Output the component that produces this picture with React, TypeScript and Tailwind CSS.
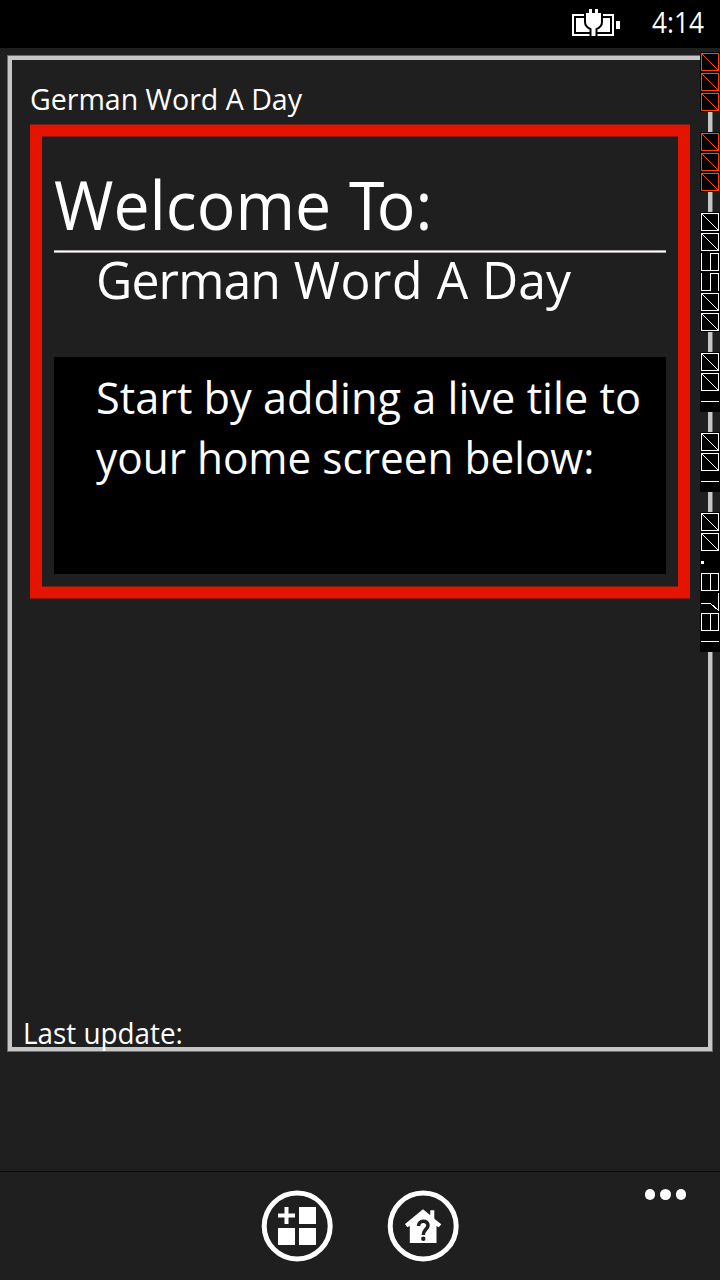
type Glyph = 'box' | 'six' | 'five' | 'dot' | 'eight' | 'seven' | 'dash'

const glyphPaths: Record<Glyph, string> = {
  box: 'M1.5 1.5H18.5V18.5H1.5ZL18.5 18.5',
  six: 'M1.5 1V18.5H18.5V1.5H10.5V18.5',
  five: 'M1.5 1V18.5H10.5V1.5H18.5V19',
  dot: 'M1 10.5H4',
  eight: 'M1.5 1.5H18.5V18.5H1.5ZM10.5 1.5V18.5',
  seven: 'M1 11.5H10.5L18.5 18.5V1',
  dash: 'M1 9.5H19',
}

const counters: { color: string; glyphs: Glyph[] }[] = [
  { color: '#ff4500', glyphs: ['box', 'box', 'box'] },
  { color: '#ff4500', glyphs: ['box', 'box', 'box'] },
  { color: '#ffffff', glyphs: ['box', 'box', 'six', 'five', 'box', 'box'] },
  { color: '#ffffff', glyphs: ['box', 'box', 'dash'] },
  { color: '#ffffff', glyphs: ['box', 'box', 'dash'] },
  { color: '#ffffff', glyphs: ['box', 'box', 'dot', 'eight', 'seven', 'eight', 'dash'] },
]

function FrameCounters() {
  return (
    <div className="absolute top-[52px] right-0 flex w-5 flex-col gap-5">
      {counters.map((group, i) => (
        <div key={i} className="flex flex-col bg-black">
          {group.glyphs.map((glyph, j) => (
            <svg key={j} viewBox="0 0 20 20" className="block size-5" shapeRendering="crispEdges">
              <path
                d={glyphPaths[glyph]}
                fill="none"
                stroke={group.color}
                strokeWidth={glyph === 'dot' ? 3 : 1}
              />
            </svg>
          ))}
        </div>
      ))}
    </div>
  )
}

function BatteryIcon() {
  const plug = 'M19 1H22V5H25V1H28V5H31V14Q31 18 25.5 20.5V28H21.5V20.5Q16 18 16 14V5H19Z'
  return (
    <svg viewBox="0 0 50 30" className="mt-2 h-[30px] w-[50px] shrink-0">
      <path d="M3 7H43V27H3Z" fill="none" stroke="#fff" strokeWidth="2" />
      <path d="M6 10H40V24H6Z" fill="#fff" />
      <path d="M46 13H50V21H46Z" fill="#fff" />
      <path d={plug} fill="none" stroke="#000" strokeWidth="4" />
      <path d={plug} fill="#fff" />
    </svg>
  )
}

function StatusBar() {
  return (
    <header className="flex h-12 shrink-0 items-start bg-black pl-[570px]">
      <BatteryIcon />
      <span className="ml-8 origin-left scale-x-[0.905] text-[29px] leading-[44px] whitespace-nowrap">4:14</span>
    </header>
  )
}

function AppBar() {
  return (
    <footer className="relative flex h-[109px] shrink-0 justify-center gap-[54px] border-t border-[#0b0b0b] pt-[18px]">
      <button aria-label="Add tile" className="size-[72px]">
        <svg viewBox="0 0 72 72" className="size-[72px]">
          <circle cx="36.2" cy="36" r="33" fill="none" stroke="#fff" strokeWidth="5" />
          <path
            d="M38 17H55V34H38ZM17 38H34V55H17ZM38 38H55V55H38ZM23.5 17H27.5V23.5H34V27.5H27.5V34H23.5V27.5H17V23.5H23.5Z"
            fill="#fff"
          />
        </svg>
      </button>
      <button aria-label="Help" className="size-[72px]">
        <svg viewBox="0 0 72 72" className="size-[72px]">
          <circle cx="36.2" cy="36" r="33" fill="none" stroke="#fff" strokeWidth="5" />
          <path d="M36 19.3L43.3 25.3V20.3H47.3V28.7L54.3 34.3L51.8 37.3L49.5 36V53H22.8V36L20.3 37.3L18 34Z" fill="#fff" />
          <path d="M31.5 36C31.5 29.8 41 29.8 41 35.3C41 39.6 36.3 39.2 36.3 45" fill="none" stroke="#1f1f1f" strokeWidth="3.6" />
          <circle cx="36.3" cy="48.7" r="2.2" fill="#1f1f1f" />
        </svg>
      </button>
      <button aria-label="More" className="absolute top-[17px] right-[34px] flex gap-[5px]">
        <span className="size-[10.5px] rounded-full bg-white" />
        <span className="size-[10.5px] rounded-full bg-white" />
        <span className="size-[10.5px] rounded-full bg-white" />
      </button>
    </footer>
  )
}

export default function App() {
  return (
    <div className="relative flex h-[1280px] w-[720px] flex-col overflow-hidden bg-[#1f1f1f] font-['Open_Sans','Noto_Sans',sans-serif] text-white">
      <StatusBar />
      <main className="flex-1 px-2 pt-2">
        <section className="flex h-[995px] flex-col border-4 border-[#c6c6c6] px-[18px] shadow-[0_0_0_1px_#6c6c6c]">
          <h1 className="h-[65px] pt-[19px] text-[29px] leading-[39px] whitespace-nowrap">
            <span className="inline-block origin-left scale-x-[0.984]">German Word A Day</span>
          </h1>
          <div className="h-[473px] w-[660px] shrink-0 border-x-12 border-y-11 border-[#e51400] px-3 shadow-[0_-1px_0_#7d1a12,0_1px_0_#7d1a12,inset_0_1px_0_#7d1a12,inset_0_-1px_0_#7d1a12]">
            <h2 className="h-[114px] pt-[22px] text-[67px] leading-[92px] whitespace-nowrap">
              <span className="inline-block origin-left scale-x-[0.961] [word-spacing:1px]">
                Welcome <span className="tracking-[-8px]">T</span>o:
              </span>
            </h2>
            <div className="h-[3px] border-y border-[#aaa6a6] bg-white" />
            <p className="h-[104px] pl-[42px] text-[52px] leading-[51px] whitespace-nowrap">
              <span className="inline-block origin-left scale-x-[0.96] [word-spacing:0.7px]">
                <span className="tracking-[-0.9px]">German</span> <span className="tracking-[0.6px]">Word</span> A Day
              </span>
            </p>
            <div className="h-[217px] bg-black pt-[10px] pl-[42px] text-[44px] leading-[60px] whitespace-nowrap">
              <p className="origin-left scale-x-[0.984]">Start by adding a live tile to</p>
              <p className="origin-left scale-x-[0.962]">your home screen below:</p>
            </div>
          </div>
          <p className="mt-auto -ml-[7px] h-[34px] text-[30px] leading-10 whitespace-nowrap">
            <span className="inline-block origin-left scale-x-[0.928]">Last update:</span>
          </p>
        </section>
      </main>
      <AppBar />
      <FrameCounters />
    </div>
  )
}
